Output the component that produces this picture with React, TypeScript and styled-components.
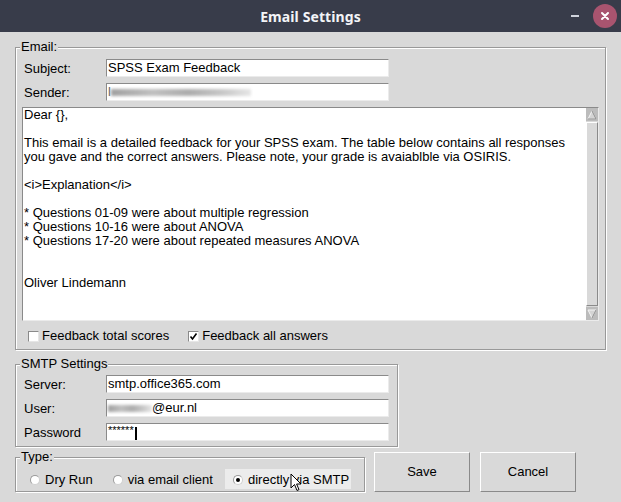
import React from 'react';
import styled, { createGlobalStyle } from 'styled-components';

const Global = createGlobalStyle`
  html, body { margin: 0; padding: 0; background: #d9d9d9; }
  body { font-family: "Liberation Sans", Arial, sans-serif; font-size: 13px; color: #000; }
`;

const Window = styled.div`
  width: 621px;
  height: 502px;
  background: #d9d9d9;
  overflow: hidden;
  display: flex;
  flex-direction: column;
`;

const TitleBar = styled.div`
  height: 32px;
  flex: none;
  background: #383c4a;
  display: grid;
  grid-template-columns: 1fr auto 1fr;
  align-items: center;
`;

const Title = styled.div`
  grid-column: 2;
  font-family: "Noto Sans", "Open Sans", sans-serif;
  font-weight: 700;
  font-size: 14px;
  color: #f3f4f7;
  letter-spacing: 0.1px;
`;

const Controls = styled.div`
  grid-column: 3;
  justify-self: end;
  display: flex;
  align-items: center;
  gap: 14px;
  padding-right: 4px;
`;

const MinBtn = styled.div`
  width: 8px;
  height: 2px;
  background: #cfd3dc;
`;

const CloseBtn = styled.div`
  width: 24px;
  height: 24px;
  border-radius: 50%;
  background: #a8546f;
  display: flex;
  align-items: center;
  justify-content: center;
`;

const Content = styled.div`
  display: flex;
  flex-direction: column;
  padding-left: 15px;
`;

const Frame = styled.div<{ $w: number; $mt: number; $pad: string }>`
  box-sizing: border-box;
  width: ${p => p.$w}px;
  margin-top: ${p => p.$mt}px;
  padding: ${p => p.$pad};
  border: 1px solid #999999;
  box-shadow: inset 1px 1px 0 #ffffff, 1px 1px 0 #ffffff;
  flex: none;
`;

const Legend = styled.div`
  display: block;
  width: fit-content;
  margin: -8px 0 0 -2px;
  padding: 0 1px;
  line-height: 14px;
  height: 14px;
  background: #d9d9d9;
  white-space: nowrap;
`;

const Row = styled.div<{ $mt: number }>`
  display: flex;
  align-items: center;
  height: 18px;
  margin-top: ${p => p.$mt}px;
  padding-left: 2px;
`;

const Label = styled.div`
  width: 82px;
  flex: none;
`;

const Entry = styled.div`
  box-sizing: border-box;
  width: 283px;
  height: 18px;
  background: #ffffff;
  border-top: 1px solid #8a8a8a;
  border-left: 1px solid #8a8a8a;
  border-right: 1px solid #ebebeb;
  border-bottom: 1px solid #ebebeb;
  padding: 0 1px;
  display: flex;
  align-items: center;
  white-space: nowrap;
  overflow: hidden;
  line-height: 16px;
`;

const Redacted = styled.span<{ $w: number }>`
  display: inline-block;
  width: ${p => p.$w}px;
  height: 7px;
  margin-top: 1px;
  background: linear-gradient(90deg, #a0a0a0 0%, #c0c0c0 30%, #acacac 55%, #c8c8c8 80%, #e6e6e6 100%);
  filter: blur(1.6px);
  flex: none;
`;

const Stars = styled.span`
  font-size: 11px;
  line-height: 10px;
  align-self: flex-start;
  margin-top: 1px;
`;

const Caret = styled.span`
  display: inline-block;
  width: 2px;
  height: 13px;
  background: #000;
  margin-left: 1px;
  margin-top: 3px;
`;

const TextBox = styled.div`
  box-sizing: border-box;
  margin-top: 6px;
  height: 214px;
  display: flex;
  background: #ffffff;
  border-top: 1px solid #8a8a8a;
  border-left: 1px solid #8a8a8a;
  border-right: 1px solid #ebebeb;
  border-bottom: 1px solid #ebebeb;
`;

const TextBody = styled.div`
  flex: 1;
  padding: 0 1px;
  white-space: pre;
  line-height: 14px;
  overflow: hidden;
`;

const ScrollBar = styled.div`
  width: 12px;
  flex: none;
  display: flex;
  flex-direction: column;
  background: #d9d9d9;
`;

const ArrowBox = styled.div`
  height: 13px;
  flex: none;
  background: #bcbcbc;
  display: flex;
  align-items: center;
  justify-content: center;
`;

const Thumb = styled.div`
  flex: 1;
  box-sizing: border-box;
  margin: 1px 0;
  background: #d9d9d9;
  border-top: 1px solid #ffffff;
  border-left: 1px solid #ffffff;
  border-right: 1px solid #8a8a8a;
  border-bottom: 1px solid #8a8a8a;
`;

const CheckRow = styled.div`
  height: 28px;
  display: flex;
  align-items: center;
  padding-left: 6px;
`;

const CheckItem = styled.div<{ $mr: number }>`
  display: flex;
  align-items: center;
  gap: 3px;
  margin-right: ${p => p.$mr}px;
`;

const CheckBox = styled.div`
  box-sizing: border-box;
  width: 11px;
  height: 11px;
  margin-top: 2px;
  background: #ffffff;
  border-top: 1px solid #8a8a8a;
  border-left: 1px solid #8a8a8a;
  border-right: 1px solid #e6e6e6;
  border-bottom: 1px solid #e6e6e6;
  display: flex;
  align-items: center;
  justify-content: center;
`;

const BottomRow = styled.div`
  display: flex;
  align-items: flex-start;
  margin-top: 5px;
`;

const RadioRow = styled.div`
  display: flex;
  align-items: center;
  gap: 10px;
  margin-top: 5px;
  height: 20px;
`;

const RadioOpt = styled.div<{ $active?: boolean }>`
  position: relative;
  display: flex;
  align-items: center;
  gap: 5px;
  height: 20px;
  padding: 0 2px 0 8px;
  background: ${p => (p.$active ? '#ececec' : 'transparent')};
`;

const RadioDot = styled.div<{ $on?: boolean }>`
  box-sizing: border-box;
  width: 10px;
  height: 10px;
  border-radius: 50%;
  background: #ffffff;
  border: 1px solid #d0d0d0;
  border-top-color: #9a9a9a;
  border-left-color: #9a9a9a;
  display: flex;
  align-items: center;
  justify-content: center;
  margin-top: 2px;
  &::after {
    content: '';
    width: 4px;
    height: 4px;
    border-radius: 50%;
    background: ${p => (p.$on ? '#000' : 'transparent')};
  }
`;

const Pointer = styled.svg`
  position: absolute;
  left: 65px;
  top: 4px;
`;

const Button = styled.div<{ $ml: number }>`
  box-sizing: border-box;
  width: 96px;
  height: 40px;
  margin-left: ${p => p.$ml}px;
  background: #d9d9d9;
  border-top: 1px solid #ffffff;
  border-left: 1px solid #ffffff;
  border-right: 1px solid #8a8a8a;
  border-bottom: 1px solid #8a8a8a;
  display: flex;
  align-items: center;
  justify-content: center;
  padding-bottom: 2px;
`;

const Triangle = ({ up }: { up: boolean }) => (
  <svg width="10" height="10" viewBox="0 0 10 10">
    <polygon
      points={up ? '5,1 9,9 1,9' : '1,1 9,1 5,9'}
      fill="#d4d4d4"
      stroke="#f4f4f4"
      strokeWidth="1"
    />
    <polyline
      points={up ? '5,1 9,9 1,9' : '9,1 5,9'}
      fill="none"
      stroke="#8a8a8a"
      strokeWidth="1"
    />
  </svg>
);

const text = `Dear {},

This email is a detailed feedback for your SPSS exam. The table below contains all responses
you gave and the correct answers. Please note, your grade is avaiablble via OSIRIS.

<i>Explanation</i>

* Questions 01-09 were about multiple regression
* Questions 10-16 were about ANOVA
* Questions 17-20 were about repeated measures ANOVA


Oliver Lindemann`;

export default function App() {
  return (
    <>
      <Global />
      <Window>
        <TitleBar>
          <Title>Email Settings</Title>
          <Controls>
            <MinBtn />
            <CloseBtn>
              <svg width="10" height="10" viewBox="0 0 10 10">
                <path d="M2 2 L8 8 M8 2 L2 8" stroke="#ffffff" strokeWidth="2" strokeLinecap="round" />
              </svg>
            </CloseBtn>
          </Controls>
        </TitleBar>
        <Content>
          <Frame $w={591} $mt={15} $pad="0 6px 0 6px">
            <Legend>Email:</Legend>
            <Row $mt={5}>
              <Label>Subject:</Label>
              <Entry>SPSS Exam Feedback</Entry>
            </Row>
            <Row $mt={6}>
              <Label>Sender:</Label>
              <Entry>
                <span style={{ color: '#666' }}>l</span>
                <Redacted $w={140} />
              </Entry>
            </Row>
            <TextBox>
              <TextBody>{text}</TextBody>
              <ScrollBar>
                <ArrowBox>
                  <Triangle up />
                </ArrowBox>
                <Thumb />
                <ArrowBox>
                  <Triangle up={false} />
                </ArrowBox>
              </ScrollBar>
            </TextBox>
            <CheckRow>
              <CheckItem $mr={19}>
                <CheckBox />
                <span>Feedback total scores</span>
              </CheckItem>
              <CheckItem $mr={0}>
                <CheckBox>
                  <svg width="9" height="9" viewBox="0 0 9 9">
                    <path d="M1.5 4.5 L3.5 7 L7.5 1.5" fill="none" stroke="#000" strokeWidth="1.6" />
                  </svg>
                </CheckBox>
                <span>Feedback all answers</span>
              </CheckItem>
            </CheckRow>
          </Frame>

          <Frame $w={383} $mt={14} $pad="0 6px 5px 6px">
            <Legend>SMTP Settings</Legend>
            <Row $mt={4}>
              <Label>Server:</Label>
              <Entry>smtp.office365.com</Entry>
            </Row>
            <Row $mt={6}>
              <Label>User:</Label>
              <Entry>
                <Redacted $w={44} />
                <span>@eur.nl</span>
              </Entry>
            </Row>
            <Row $mt={6}>
              <Label>Password</Label>
              <Entry>
                <Stars>******</Stars>
                <Caret />
              </Entry>
            </Row>
          </Frame>

          <BottomRow>
            <Frame $w={350} $mt={5} $pad="0 6px 2px 6px">
              <Legend>Type:</Legend>
              <RadioRow>
                <RadioOpt>
                  <RadioDot />
                  <span>Dry Run</span>
                </RadioOpt>
                <RadioOpt>
                  <RadioDot />
                  <span>via email client</span>
                </RadioOpt>
                <RadioOpt $active>
                  <RadioDot $on />
                  <span>directly via SMTP</span>
                  <Pointer width="12" height="19" viewBox="0 0 12 19">
                    <path d="M1 1 L1 15 L4.5 11.5 L7 17.5 L9 16.6 L6.6 11 L11 11 Z" fill="#ffffff" stroke="#000" strokeWidth="1" strokeLinejoin="round" />
                  </Pointer>
                </RadioOpt>
              </RadioRow>
            </Frame>
            <Button $ml={9}>Save</Button>
            <Button $ml={10}>Cancel</Button>
          </BottomRow>
        </Content>
      </Window>
    </>
  );
}
